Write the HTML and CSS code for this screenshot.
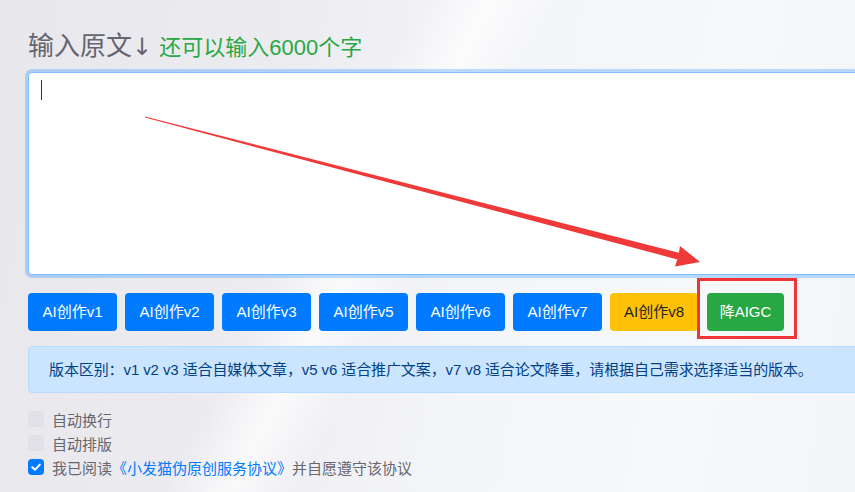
FILE: index.html
```html
<!DOCTYPE html>
<html lang="zh-CN">
<head>
<meta charset="utf-8">
<title>输入原文</title>
<link rel="stylesheet" href="styles.css">
</head>
<body>
<div class="page">
  <div class="main">
    <h2 class="title">输入原文<span class="down">↓</span> <span class="remain">还可以输入6000个字</span></h2>
    <div class="editor">
      <textarea class="input"></textarea>
      <span class="caret"></span>
    </div>
    <div class="actions">
      <button class="btn btn-blue">AI创作v1</button>
      <button class="btn btn-blue">AI创作v2</button>
      <button class="btn btn-blue">AI创作v3</button>
      <button class="btn btn-blue">AI创作v5</button>
      <button class="btn btn-blue">AI创作v6</button>
      <button class="btn btn-blue">AI创作v7</button>
      <button class="btn btn-yellow">AI创作v8</button>
      <button class="btn btn-green">降AIGC</button>
    </div>
    <div class="alert">版本区别：v1 v2 v3 适合自媒体文章，v5 v6 适合推广文案，v7 v8 适合论文降重，请根据自己需求选择适当的版本。</div>
    <ul class="options">
      <li class="opt"><span class="box"></span>自动换行</li>
      <li class="opt"><span class="box"></span>自动排版</li>
      <li class="opt"><span class="box checked"><svg viewBox="0 0 16 16" width="16" height="16"><path d="M4.3 8.2 L7 10.8 L11.8 5.6" fill="none" stroke="#fff" stroke-width="2" stroke-linecap="round" stroke-linejoin="round"/></svg></span>我已阅读<a class="link" href="#">《小发猫伪原创服务协议》</a>并自愿遵守该协议</li>
    </ul>
  </div>
  <svg class="arrow" width="855" height="492" viewBox="0 0 855 492">
    <polygon points="145,116.4 678.9,252.8 680,246 700,262 675,266.5 677.3,259.4 145,117.6" fill="#f03a3a"/>
  </svg>
  <div class="mark"></div>
</div>
</body>
</html>
```
FILE: styles.css
```css
html, body {
  margin: 0;
  padding: 0;
}
body {
  width: 855px;
  height: 492px;
  overflow: hidden;
  font-family: "Liberation Sans", "Noto Sans CJK SC", sans-serif;
  background:
    linear-gradient(118deg, rgba(255,255,255,0) 38%, rgba(255,255,255,0.7) 44%, rgba(255,255,255,0) 50%, rgba(255,255,255,0) 100%),
    linear-gradient(100deg, #e7e7ec 0%, #ececf0 30%, #f4f5f8 55%, #f7f8fa 80%, #f4f5f8 100%);
}
.page {
  position: relative;
  width: 855px;
  height: 492px;
  overflow: hidden;
}
.main {
  width: 920px;
  padding: 25px 0 0 28px;
  box-sizing: border-box;
}
.title {
  margin: 0 0 3px;
  font-size: 26px;
  font-weight: normal;
  line-height: 42px;
  color: #66646e;
}
.down {
  font-family: "DejaVu Sans", "Noto Sans CJK SC", sans-serif;
  font-size: 24px;
}
.remain {
  font-size: 22px;
  color: #28a745;
}
.editor {
  position: relative;
}
.input {
  display: block;
  width: 100%;
  height: 203px;
  box-sizing: border-box;
  margin: 0;
  border: 1px solid #80bdff;
  border-radius: 4px;
  box-shadow: 0 0 0 3px rgba(0,123,255,0.25);
  background: #fff;
  resize: none;
  outline: none;
  font: inherit;
}
.caret {
  position: absolute;
  left: 13px;
  top: 8px;
  width: 1px;
  height: 20px;
  background: #333;
}
.actions {
  display: flex;
  gap: 8px;
  margin-top: 18px;
}
.btn {
  flex: none;
  width: 89px;
  height: 38px;
  padding: 0;
  border: 0;
  border-radius: 4px;
  font-family: inherit;
  font-size: 15px;
  line-height: 38px;
  color: #fff;
}
.btn-blue { background: #007bff; }
.btn-yellow { background: #ffc107; color: #212529; width: 88px; }
.btn-green { background: #28a745; width: 77px; margin-left: 1px; }
.alert {
  margin-top: 15px;
  height: 47px;
  box-sizing: border-box;
  padding: 0 20px;
  line-height: 45px;
  font-size: 15px;
  letter-spacing: -0.1px;
  color: #004085;
  background: #cce5ff;
  border: 1px solid #b8daff;
  border-radius: 4px;
}
.options {
  list-style: none;
  margin: 14px 0 0;
  padding: 0;
}
.opt {
  display: flex;
  align-items: center;
  height: 24px;
  font-size: 15px;
  color: #68666e;
}
.box {
  display: inline-block;
  width: 16px;
  height: 16px;
  margin-right: 8px;
  border-radius: 4px;
  background: #e0e2e7;
}
.box svg { display: block; }
.box.checked { background: #007bff; }
.link {
  color: #007bff;
  text-decoration: none;
}
.arrow {
  position: absolute;
  left: 0;
  top: 0;
  pointer-events: none;
}
.mark {
  position: absolute;
  left: 697px;
  top: 278px;
  width: 100px;
  height: 61px;
  box-sizing: border-box;
  border: 3px solid #ef3535;
}
```
